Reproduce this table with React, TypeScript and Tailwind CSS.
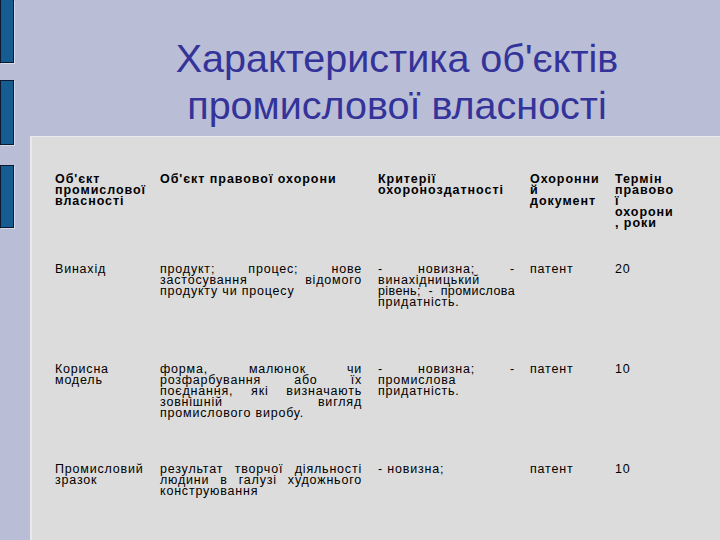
import React from "react";

const J = ({ children, className = "" }: { children: React.ReactNode; className?: string }) => (
  <div className={`text-justify [text-align-last:justify] whitespace-nowrap ${className}`}>{children}</div>
);
const L = ({ children }: { children: React.ReactNode }) => <div>{children}</div>;

const Row = ({ h, cells, head }: { h: string; cells: React.ReactNode[]; head?: boolean }) => (
  <div
    className={`grid grid-cols-[105px_218px_152px_85px_80px] ${h} ${
      head ? "font-bold tracking-[0.95px]" : "tracking-[0.8px]"
    }`}
  >
    <div className="pr-[10px]">{cells[0]}</div>
    <div className="pr-[16px]">{cells[1]}</div>
    <div className="pr-[15px]">{cells[2]}</div>
    <div className="whitespace-nowrap">{cells[3]}</div>
    <div className="whitespace-nowrap">{cells[4]}</div>
  </div>
);

export default function App() {
  return (
    <div
      className="w-[720px] h-[540px] bg-[#babdd6] flex overflow-hidden"
      style={{ fontFamily: '"Liberation Sans", Arial, sans-serif' }}
    >
      <div className="w-[30px] shrink-0 flex flex-col">
        <div className="w-[14px] h-[63px] bg-[#165c91] border border-[#0a1a33] border-t-0 shadow-[1px_1px_0_#d8dae8]" />
        <div className="w-[14px] h-[65px] mt-[17px] bg-[#165c91] border border-[#0a1a33] shadow-[1px_1px_0_#d8dae8]" />
        <div className="w-[14px] h-[63px] mt-[20px] bg-[#165c91] border border-[#0a1a33] shadow-[1px_1px_0_#d8dae8]" />
      </div>
      <div className="flex-1 flex flex-col">
        <div className="h-[136px] shrink-0 pt-[35px] pl-[44px] flex flex-col items-center text-[39.5px] leading-[47px] text-[#333399]">
          <div>Характеристика об'єктів</div>
          <div>промислової власності</div>
        </div>
        <div className="flex-1 bg-[#dcdcdc] border-l-2 border-t border-[#e8e8ee] pl-[23px] pt-[37px] text-[12.5px] leading-[11px] text-black">
          <Row
            head
            h="h-[90px]"
            cells={[
              <>
                <L>Об'єкт</L>
                <L>промислової</L>
                <L>власності</L>
              </>,
              <L>Об'єкт правової охорони</L>,
              <>
                <L>Критерії</L>
                <L>охороноздатності</L>
              </>,
              <>
                <L>Охоронни</L>
                <L>й</L>
                <L>документ</L>
              </>,
              <>
                <L>Термін</L>
                <L>правово</L>
                <L>ї</L>
                <L>охорони</L>
                <L>, роки</L>
              </>,
            ]}
          />
          <Row
            h="h-[100px]"
            cells={[
              <L>Винахід</L>,
              <>
                <J>продукт; процес; нове</J>
                <J>застосування відомого</J>
                <L>продукту чи процесу</L>
              </>,
              <>
                <J>- новизна; -</J>
                <L>винахідницький</L>
                <J className="tracking-[0.4px]">рівень; - промислова</J>
                <L>придатність.</L>
              </>,
              <L>патент</L>,
              <L>20</L>,
            ]}
          />
          <Row
            h="h-[100px]"
            cells={[
              <>
                <L>Корисна</L>
                <L>модель</L>
              </>,
              <>
                <J>форма, малюнок чи</J>
                <J>розфарбування або їх</J>
                <J>поєднання, які визначають</J>
                <J>зовнішній вигляд</J>
                <L>промислового виробу.</L>
              </>,
              <>
                <J>- новизна; -</J>
                <L>промислова</L>
                <L>придатність.</L>
              </>,
              <L>патент</L>,
              <L>10</L>,
            ]}
          />
          <Row
            h="h-[60px]"
            cells={[
              <>
                <L>Промисловий</L>
                <L>зразок</L>
              </>,
              <>
                <J>результат творчої діяльності</J>
                <J>людини в галузі художнього</J>
                <L>конструювання</L>
              </>,
              <L>- новизна;</L>,
              <L>патент</L>,
              <L>10</L>,
            ]}
          />
        </div>
      </div>
    </div>
  );
}
